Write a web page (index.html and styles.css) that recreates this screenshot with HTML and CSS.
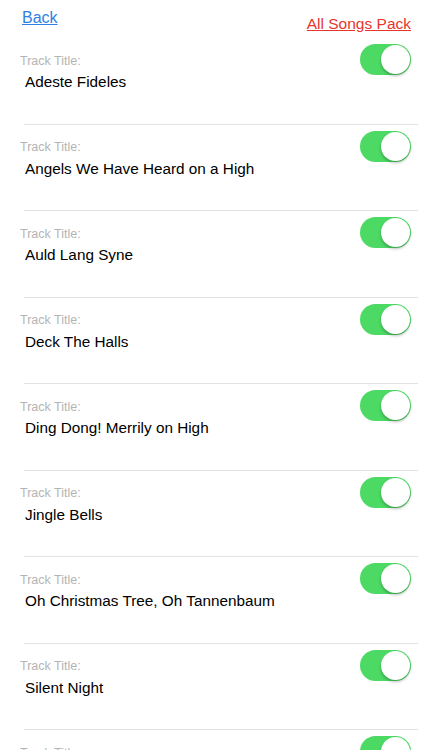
FILE: index.html
```html
<!DOCTYPE html>
<html lang="en">
<head>
  <meta charset="UTF-8" />
  <title>Track List</title>
  <link rel="stylesheet" href="styles.css">
</head>
<body>
  <div class="header">
    <a href="#" class="back">Back</a>
    <a href="#" class="pack">All Songs Pack</a>
  </div>

  <div class="tracks">
    <div class="track">
      <div class="info">
        <div class="label">Track Title:</div>
        <div class="title">Adeste Fideles</div>
      </div>
      <div class="switch on"><span class="knob"></span></div>
    </div>
    <div class="track">
      <div class="info">
        <div class="label">Track Title:</div>
        <div class="title">Angels We Have Heard on a High</div>
      </div>
      <div class="switch on"><span class="knob"></span></div>
    </div>
    <div class="track">
      <div class="info">
        <div class="label">Track Title:</div>
        <div class="title">Auld Lang Syne</div>
      </div>
      <div class="switch on"><span class="knob"></span></div>
    </div>
    <div class="track">
      <div class="info">
        <div class="label">Track Title:</div>
        <div class="title">Deck The Halls</div>
      </div>
      <div class="switch on"><span class="knob"></span></div>
    </div>
    <div class="track">
      <div class="info">
        <div class="label">Track Title:</div>
        <div class="title">Ding Dong! Merrily on High</div>
      </div>
      <div class="switch on"><span class="knob"></span></div>
    </div>
    <div class="track">
      <div class="info">
        <div class="label">Track Title:</div>
        <div class="title">Jingle Bells</div>
      </div>
      <div class="switch on"><span class="knob"></span></div>
    </div>
    <div class="track">
      <div class="info">
        <div class="label">Track Title:</div>
        <div class="title">Oh Christmas Tree, Oh Tannenbaum</div>
      </div>
      <div class="switch on"><span class="knob"></span></div>
    </div>
    <div class="track">
      <div class="info">
        <div class="label">Track Title:</div>
        <div class="title">Silent Night</div>
      </div>
      <div class="switch on"><span class="knob"></span></div>
    </div>
    <div class="track">
      <div class="info">
        <div class="label">Track Title:</div>
        <div class="title">The First Noel</div>
      </div>
      <div class="switch on"><span class="knob"></span></div>
    </div>
  </div>
</body>
</html>
```

FILE: styles.css
```css
body {
  margin: 0;
  font-family: "Liberation Sans", Arial, sans-serif;
  background: #fff;
  color: #000;
  overflow: hidden;
}
.header {
  height: 38px;
  display: flex;
  justify-content: space-between;
  padding: 0 11px 0 22px;
}
.header a {
  text-decoration: underline;
}
.back {
  color: #2f80e3;
  font-size: 16px;
  line-height: 18px;
  margin-top: 9px;
}
.pack {
  color: #e8352c;
  font-size: 15.5px;
  line-height: 18px;
  margin-top: 14.5px;
}
.track {
  height: 86.5px;
  box-sizing: border-box;
  display: flex;
  align-items: flex-start;
  margin: 0 4px 0 0;
  position: relative;
}
.track::after {
  content: "";
  position: absolute;
  left: 24px;
  right: 0;
  bottom: 0;
  border-bottom: 1px solid #e2e2e2;
}
.info {
  flex: 1;
  padding: 15.5px 0 0 20px;
}
.label {
  color: #b4b4b4;
  font-size: 12.5px;
  line-height: 15px;
}
.title {
  font-size: 15.3px;
  line-height: 18px;
  margin: 4.5px 0 0 5px;
}
.switch {
  width: 51px;
  height: 31px;
  border-radius: 16px;
  background: #e5e5e5;
  margin: 6px 7px 0 0;
  position: relative;
}
.switch.on {
  background: #4cd964;
}
.knob {
  position: absolute;
  top: 1px;
  right: 1px;
  width: 29px;
  height: 29px;
  border-radius: 50%;
  background: #fff;
  box-shadow: 0 2px 3px rgba(0, 0, 0, 0.25);
}
```
